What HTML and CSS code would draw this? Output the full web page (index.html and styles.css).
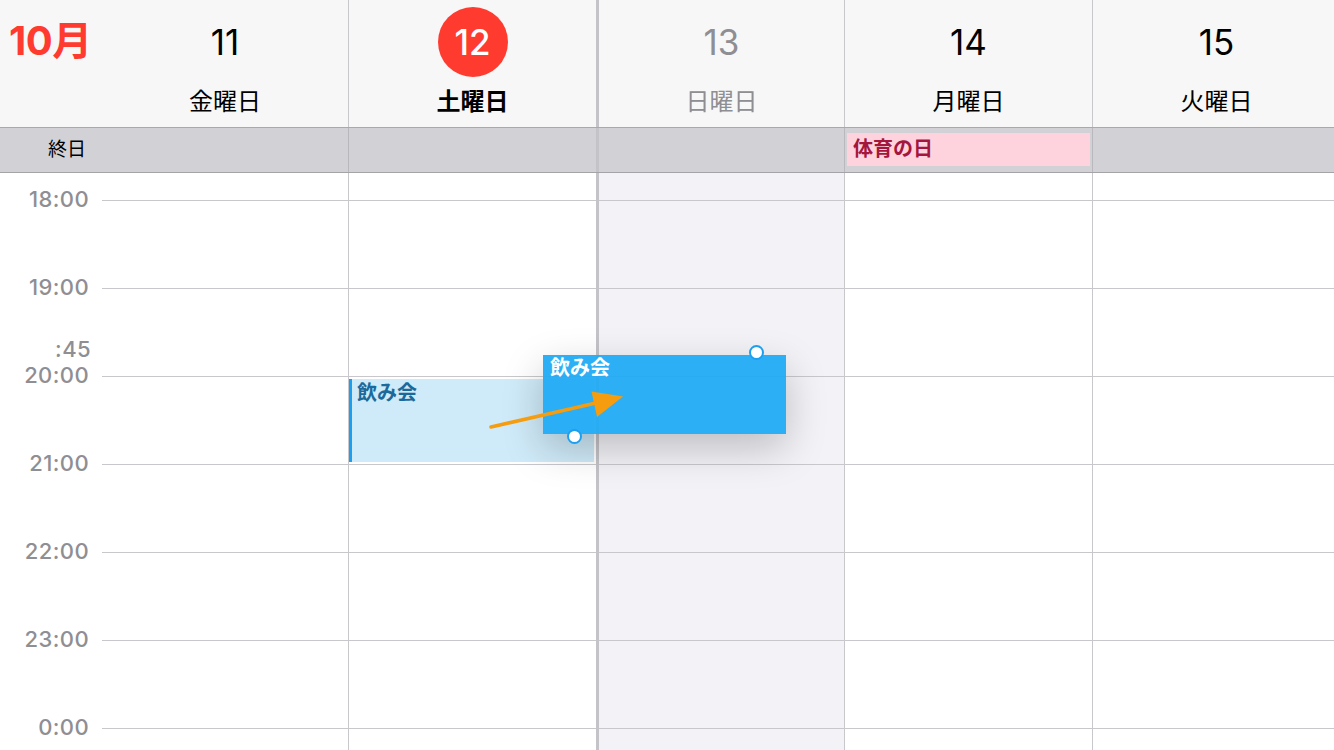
FILE: index.html
```html
<!DOCTYPE html>
<html lang="ja">
<head>
    <meta charset="UTF-8">
    <meta name="viewport" content="width=device-width, initial-scale=1.0">
    <title>カレンダー 週表示</title>
    <link rel="stylesheet" href="styles.css">
</head>
<body>

    <div class="calendar">
        <!-- week header -->
        <div class="week-head">
            <div class="month">10月</div>
            <div class="day">
                <span class="num">11</span>
                <span class="name">金曜日</span>
            </div>
            <div class="day today">
                <span class="num">12</span>
                <span class="name">土曜日</span>
            </div>
            <div class="day sunday">
                <span class="num">13</span>
                <span class="name">日曜日</span>
            </div>
            <div class="day">
                <span class="num">14</span>
                <span class="name">月曜日</span>
            </div>
            <div class="day">
                <span class="num">15</span>
                <span class="name">火曜日</span>
            </div>
        </div>

        <!-- all day row -->
        <div class="allday">
            <div class="allday-label">終日</div>
            <div class="allday-cell"></div>
            <div class="allday-cell"></div>
            <div class="allday-cell sunday"></div>
            <div class="allday-cell">
                <div class="holiday">体育の日</div>
            </div>
            <div class="allday-cell"></div>
        </div>

        <!-- time grid -->
        <div class="timeline">
            <div class="gutter">
                <div class="hour">18:00</div>
                <div class="hour">19:00</div>
                <div class="hour">20:00</div>
                <div class="hour">21:00</div>
                <div class="hour">22:00</div>
                <div class="hour">23:00</div>
                <div class="hour">0:00</div>
                <div class="drag-time">:45</div>
            </div>
            <div class="col"></div>
            <div class="col">
                <div class="event ghost">飲み会</div>
            </div>
            <div class="col sunday"></div>
            <div class="col"></div>
            <div class="col"></div>

            <!-- event being dragged -->
            <div class="event dragging">
                飲み会
                <span class="handle handle-top"></span>
                <span class="handle handle-bottom"></span>
            </div>

            <svg class="drag-arrow" width="1334" height="577" viewBox="0 0 1334 577">
                <line x1="491" y1="254" x2="596" y2="230" stroke="#f59c0f" stroke-width="3.5" stroke-linecap="round"/>
                <polygon points="623,223.5 591.5,218.5 597,244" fill="#f59c0f"/>
            </svg>
        </div>
    </div>

</body>
</html>
```

FILE: styles.css
```css
body {
    margin: 0;
    font-family: Inter, "Noto Sans CJK JP", sans-serif;
    background-color: #ffffff;
    overflow: hidden;
}

.calendar {
    width: 1334px;
    height: 750px;
    overflow: hidden;
}

/* shared column template: gutter + 5 days */
.week-head,
.allday,
.timeline {
    display: grid;
    grid-template-columns: 102px 246px repeat(4, 248px);
}

/* header */
.week-head {
    height: 127px;
    background-color: #f7f7f7;
    border-bottom: 1px solid #a9a9ad;
}

.month {
    margin-top: 6px;
    padding-left: 9px;
    height: 70px;
    line-height: 70px;
    font-size: 40px;
    font-weight: 700;
    color: #ff3b30;
    letter-spacing: -0.5px;
}

.day {
    display: flex;
    flex-direction: column;
    align-items: center;
    border-left: 1px solid #c8c8cc;
}

.week-head .month + .day {
    border-left: none;
}

.day .num {
    margin-top: 7px;
    width: 70px;
    height: 70px;
    line-height: 70px;
    text-align: center;
    font-size: 35px;
    font-weight: 400;
    color: #000000;
}

.day .name {
    margin-top: 10px;
    font-size: 24px;
    line-height: 30px;
    color: #000000;
}

.day.today .num {
    background-color: #ff3b30;
    border-radius: 50%;
    color: #ffffff;
    font-weight: 500;
}

.day.today .name {
    font-weight: 700;
}

.day.sunday .num,
.day.sunday .name {
    color: #8e8e93;
}

/* all day row */
.allday {
    height: 44px;
    background-color: #d1d1d6;
    border-bottom: 1px solid #a3a3a8;
}

.allday-label {
    text-align: right;
    padding-right: 16px;
    font-size: 19px;
    line-height: 44px;
    color: #000000;
}

.allday-cell {
    border-left: 1px solid #b8b8bd;
}

.allday-label + .allday-cell {
    border-left: none;
}

.holiday {
    margin: 5px 2px 0 2px;
    height: 33px;
    line-height: 33px;
    padding-left: 6px;
    background-color: #ffd3de;
    color: #a3173e;
    font-size: 20px;
    font-weight: 700;
}

/* time grid */
.timeline {
    position: relative;
    height: 577px;
    overflow: hidden;
}

.gutter {
    position: relative;
    padding-top: 15px;
}

.hour {
    height: 88px;
    line-height: 22px;
    text-align: right;
    padding-right: 13px;
    font-size: 22px;
    font-weight: 500;
    letter-spacing: 0.4px;
    color: #8e8e93;
}

.drag-time {
    position: absolute;
    top: 165px;
    right: 11px;
    line-height: 22px;
    font-size: 22px;
    font-weight: 500;
    letter-spacing: 0.4px;
    color: #8e8e93;
}

.col {
    position: relative;
    border-left: 1px solid #c8c8cc;
    background-image: repeating-linear-gradient(to bottom,
        transparent 0, transparent 27px,
        #c8c7cc 27px, #c8c7cc 28px,
        transparent 28px, transparent 88px);
}

.gutter + .col {
    border-left: none;
}

.allday-cell.sunday,
.day.sunday,
.col.sunday {
    border-left: 3px solid #c4c4c8;
}

.col.sunday {
    background-color: #f2f2f7;
}

/* events */
.event {
    position: absolute;
    box-sizing: border-box;
    font-size: 20px;
    font-weight: 700;
    line-height: 26px;
}

.event.ghost {
    top: 206px;
    left: 0;
    right: 2px;
    height: 83px;
    padding: 1px 5px;
    background-color: #cfeaf8;
    border-left: 3px solid #1d9ff0;
    color: #1a6a9c;
}

.event.dragging {
    top: 182px;
    left: 543px;
    width: 243px;
    height: 79px;
    padding: 0 7px;
    background-color: rgba(32, 170, 245, 0.94);
    color: #ffffff;
    font-weight: 600;
    box-shadow: 0 14px 40px rgba(0, 0, 0, 0.22);
    z-index: 2;
}

.handle {
    position: absolute;
    width: 11px;
    height: 11px;
    border: 2px solid #1d9ff0;
    border-radius: 50%;
    background-color: #ffffff;
}

.handle-top {
    left: 206px;
    top: -10px;
}

.handle-bottom {
    left: 24px;
    top: 74px;
}

.drag-arrow {
    position: absolute;
    left: 0;
    top: 0;
    z-index: 3;
    pointer-events: none;
}
```
